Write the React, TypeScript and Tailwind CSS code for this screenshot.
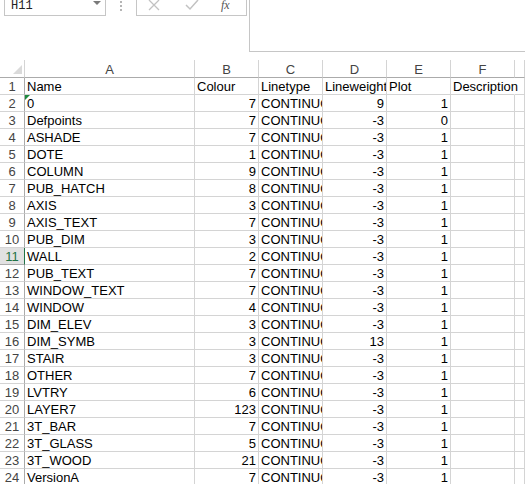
import React from 'react'

type Row = [string, number, string, number, number]

const rows: Row[] = [
  ['0', 7, 'CONTINUOUS', 9, 1],
  ['Defpoints', 7, 'CONTINUOUS', -3, 0],
  ['ASHADE', 7, 'CONTINUOUS', -3, 1],
  ['DOTE', 1, 'CONTINUOUS', -3, 1],
  ['COLUMN', 9, 'CONTINUOUS', -3, 1],
  ['PUB_HATCH', 8, 'CONTINUOUS', -3, 1],
  ['AXIS', 3, 'CONTINUOUS', -3, 1],
  ['AXIS_TEXT', 7, 'CONTINUOUS', -3, 1],
  ['PUB_DIM', 3, 'CONTINUOUS', -3, 1],
  ['WALL', 2, 'CONTINUOUS', -3, 1],
  ['PUB_TEXT', 7, 'CONTINUOUS', -3, 1],
  ['WINDOW_TEXT', 7, 'CONTINUOUS', -3, 1],
  ['WINDOW', 4, 'CONTINUOUS', -3, 1],
  ['DIM_ELEV', 3, 'CONTINUOUS', -3, 1],
  ['DIM_SYMB', 3, 'CONTINUOUS', 13, 1],
  ['STAIR', 3, 'CONTINUOUS', -3, 1],
  ['OTHER', 7, 'CONTINUOUS', -3, 1],
  ['LVTRY', 6, 'CONTINUOUS', -3, 1],
  ['LAYER7', 123, 'CONTINUOUS', -3, 1],
  ['3T_BAR', 7, 'CONTINUOUS', -3, 1],
  ['3T_GLASS', 5, 'CONTINUOUS', -3, 1],
  ['3T_WOOD', 21, 'CONTINUOUS', -3, 1],
  ['VersionA', 7, 'CONTINUOUS', -3, 1],
]

const grid = 'grid grid-cols-[25px_170px_64px_64px_64px_64px_64px_1fr]'
const cellBase = 'h-[17px] border-b border-r border-[#d4d4d4] whitespace-nowrap pt-[2px] leading-[14px] px-[2px]'
const cell = cellBase + ' overflow-hidden'

function RowHead({ n, active }: { n: number; active?: boolean }) {
  return (
    <div
      className={
        'h-[17px] border-b border-r pt-[2px] leading-[14px] text-center ' +
        (active
          ? 'bg-[#e1e1e1] text-[#217346] border-r-[#217346] border-b-[#ababab]'
          : 'text-[#444] border-b-[#d4d4d4] border-r-[#ababab]')
      }
    >
      {n}
    </div>
  )
}

export default function App() {
  return (
    <div className="w-[525px] h-[484px] overflow-hidden bg-white text-[13px] text-black" style={{ fontFamily: '"Liberation Sans", Arial, sans-serif' }}>
      {/* formula bar */}
      <div className="h-[60px] flex items-start">
        <div className="ml-[4px] -mt-[9px] w-[102px] h-[25px] border border-[#c6c6c6] flex items-end justify-between pl-[6px] pr-[4px] pb-[3px]">
          <span className="text-[12px] leading-[12px] text-[#222]" style={{ fontFamily: '"Liberation Mono", monospace' }}>H11</span>
          <span className="mb-[7px] w-0 h-0 border-l-[4px] border-r-[4px] border-t-[4px] border-l-transparent border-r-transparent border-t-[#7a7a7a]" />
        </div>
        <div className="ml-[14px] mt-[1px] flex flex-col gap-[2px]">
          <span className="w-[2px] h-[2px] bg-[#b5b5b5]" />
          <span className="w-[2px] h-[2px] bg-[#b5b5b5]" />
          <span className="w-[2px] h-[2px] bg-[#b5b5b5]" />
        </div>
        <div className="ml-[14px] -mt-[9px] w-[111px] h-[25px] border border-[#c6c6c6] flex items-end pb-[4px]">
          <svg className="ml-[11px]" width="12" height="12" viewBox="0 0 12 12">
            <path d="M1 1 L11 11 M11 1 L1 11" stroke="#c2c2c2" strokeWidth="1.3" fill="none" />
          </svg>
          <svg className="ml-[25px]" width="14" height="12" viewBox="0 0 14 12">
            <path d="M1 6 L5 10 L13 1" stroke="#c2c2c2" strokeWidth="1.5" fill="none" />
          </svg>
          <span className="ml-[22px] text-[12px] leading-[12px] italic text-[#555]" style={{ fontFamily: '"Liberation Serif", serif' }}>fx</span>
        </div>
        <div className="ml-[2px] -mt-[9px] flex-1 h-[61px] border-l border-b border-[#c6c6c6]" />
      </div>

      {/* column headers */}
      <div className={grid + ' text-[#444]'}>
        <div className="h-[18px] border-b border-[#ababab] border-r border-r-[#d4d4d4] relative">
          <svg className="absolute right-[2px] bottom-[3px]" width="9" height="9" viewBox="0 0 9 9">
            <path d="M9 0 L9 9 L0 9 Z" fill="#dadada" />
          </svg>
        </div>
        {['A', 'B', 'C', 'D', 'E', 'F', ''].map((c, i) => (
          <div key={i} className="h-[18px] border-b border-[#ababab] border-r border-r-[#d4d4d4] text-center pt-[3px] leading-[14px]">
            {c}
          </div>
        ))}
      </div>

      {/* header row */}
      <div className={grid}>
        <RowHead n={1} />
        <div className={cell}>Name</div>
        <div className={cell}>Colour</div>
        <div className={cell}>Linetype</div>
        <div className={cell}>Lineweight</div>
        <div className={cell}>Plot</div>
        <div className={cellBase + ' relative z-10 border-r-transparent'}>Description</div>
        <div className={cell} />
      </div>

      {rows.map((r, i) => (
        <div key={i} className={grid}>
          <RowHead n={i + 2} active={i + 2 === 11} />
          <div className={cell + ' relative'}>
            {i === 0 && (
              <span className="absolute left-0 top-0 w-0 h-0 border-t-[5px] border-r-[5px] border-t-[#1e8a3e] border-r-transparent" />
            )}
            {r[0]}
          </div>
          <div className={cell + ' text-right'}>{r[1]}</div>
          <div className={cell}>{r[2]}</div>
          <div className={cell + ' text-right'}>{r[3]}</div>
          <div className={cell + ' text-right'}>{r[4]}</div>
          <div className={cell} />
          <div className={cell} />
        </div>
      ))}
    </div>
  )
}
